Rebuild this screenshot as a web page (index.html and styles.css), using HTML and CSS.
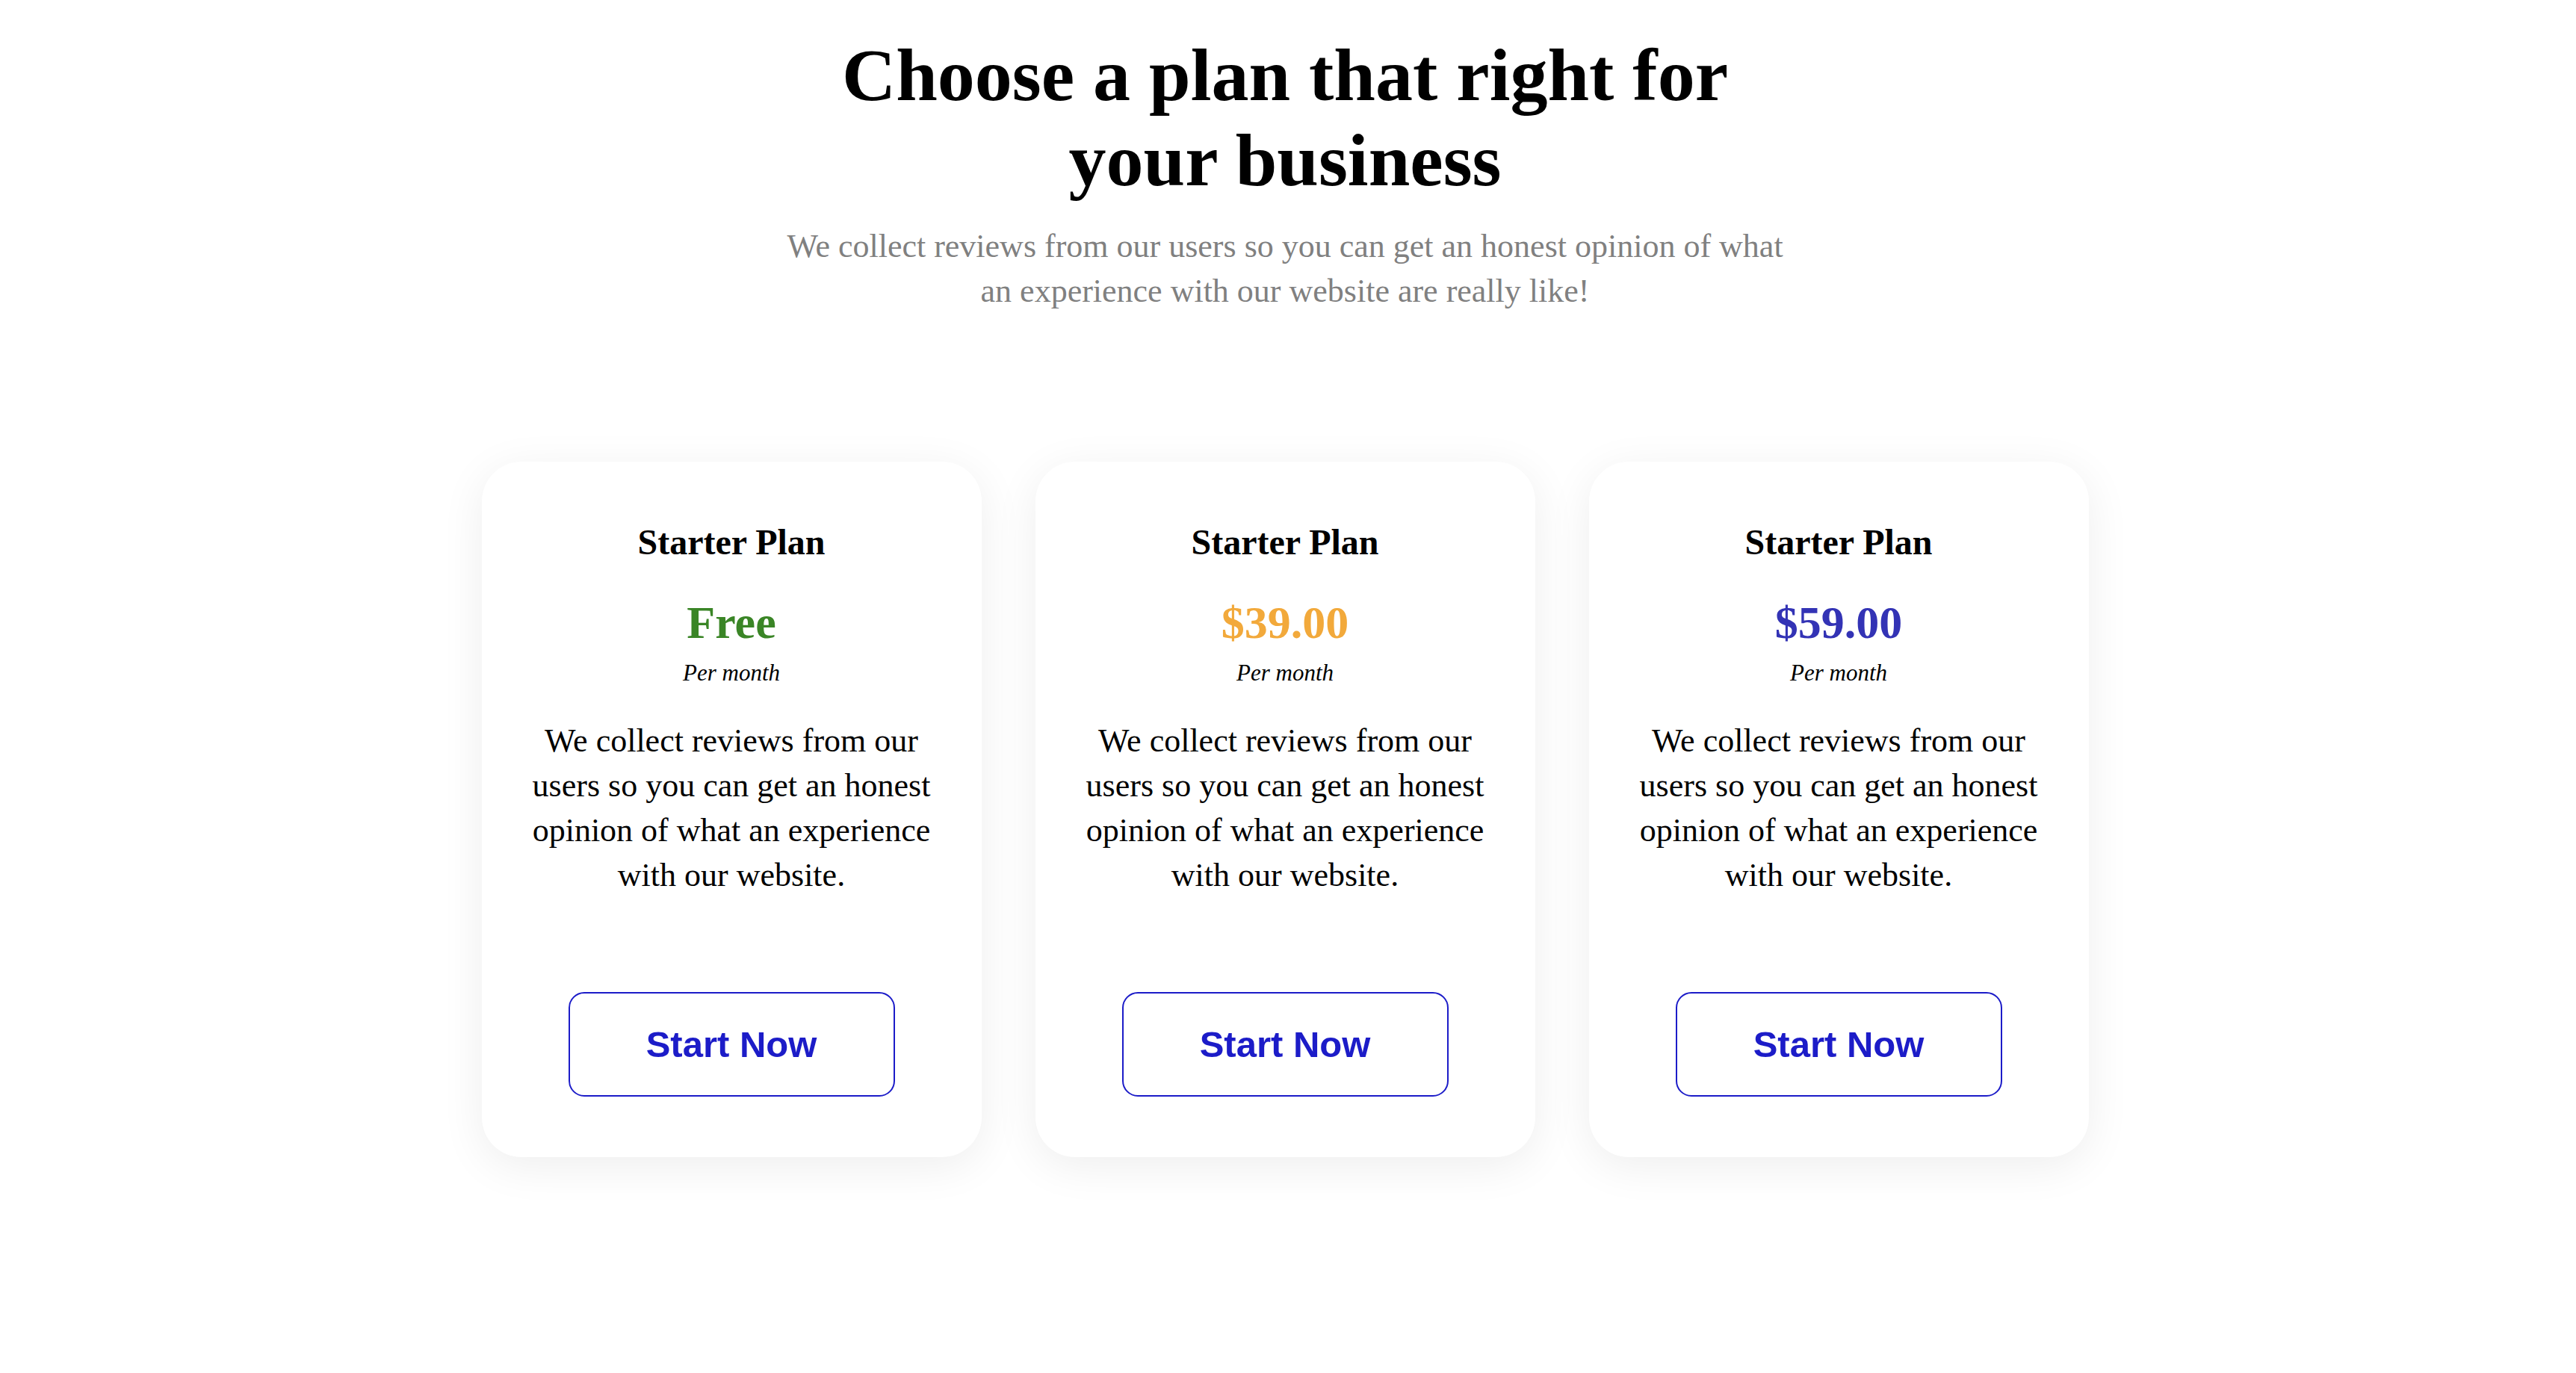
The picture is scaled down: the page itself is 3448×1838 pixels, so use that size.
FILE: index.html
```html
<!DOCTYPE html>
<html lang="en">
<head>
<meta charset="utf-8">
<title>Pricing</title>
<link rel="stylesheet" href="styles.css">
</head>
<body>
<main class="page">
  <header class="intro">
    <h1 class="title">Choose a plan that right for your business</h1>
    <p class="lead">We collect reviews from our users so you can get an honest opinion of what an experience with our website are really like!</p>
  </header>
  <section class="plans">
    <article class="card">
      <h2 class="plan-name">Starter Plan</h2>
      <div class="price price-free">Free</div>
      <div class="period">Per month</div>
      <p class="desc">We collect reviews from our users so you can get an honest opinion of what an experience with our website.</p>
      <button class="cta">Start Now</button>
    </article>
    <article class="card">
      <h2 class="plan-name">Starter Plan</h2>
      <div class="price price-mid">$39.00</div>
      <div class="period">Per month</div>
      <p class="desc">We collect reviews from our users so you can get an honest opinion of what an experience with our website.</p>
      <button class="cta">Start Now</button>
    </article>
    <article class="card">
      <h2 class="plan-name">Starter Plan</h2>
      <div class="price price-top">$59.00</div>
      <div class="period">Per month</div>
      <p class="desc">We collect reviews from our users so you can get an honest opinion of what an experience with our website.</p>
      <button class="cta">Start Now</button>
    </article>
  </section>
</main>
</body>
</html>
```
FILE: styles.css
```css
html, body {
  margin: 0;
  padding: 0;
  background: #ffffff;
}

body {
  padding-right: 8px;
  font-family: "Liberation Serif", "Times New Roman", serif;
  color: #000000;
}

.page {
  display: flex;
  flex-direction: column;
  align-items: center;
  padding-top: 44px;
  padding-bottom: 200px;
}

.intro {
  width: 1370px;
  display: flex;
  flex-direction: column;
  align-items: center;
  text-align: center;
}

.title {
  margin: 0;
  font-size: 100px;
  font-weight: 700;
  line-height: 114px;
}

.lead {
  margin: 28px 0 0 0;
  font-size: 44px;
  line-height: 60px;
  color: #808080;
}

.plans {
  margin-top: 198px;
  display: flex;
  gap: 72px;
}

.card {
  width: 669px;
  box-sizing: border-box;
  padding: 81px 66px 81px 66px;
  background: #ffffff;
  border-radius: 53px;
  box-shadow: 0 12px 60px rgba(0, 0, 0, 0.07);
  display: flex;
  flex-direction: column;
  align-items: center;
  text-align: center;
}

.plan-name {
  margin: 0;
  font-size: 48px;
  font-weight: 700;
  line-height: 53px;
}

.price {
  margin-top: 47px;
  font-size: 62px;
  font-weight: 700;
  line-height: 69px;
}

.price-free { color: #3a8526; }
.price-mid { color: #f2a93b; }
.price-top { color: #3333b5; }

.period {
  margin-top: 16px;
  font-size: 31px;
  font-style: italic;
  line-height: 34px;
}

.desc {
  margin: 44px 0 0 0;
  font-size: 44px;
  line-height: 60px;
}

.cta {
  margin-top: 126px;
  width: 437px;
  height: 140px;
  box-sizing: border-box;
  background: #ffffff;
  border: 2px solid #1c1cc8;
  border-radius: 21px;
  color: #1c1cc8;
  font-family: "Liberation Sans", Arial, sans-serif;
  font-weight: 700;
  font-size: 49px;
  padding: 0;
  cursor: pointer;
}
```
